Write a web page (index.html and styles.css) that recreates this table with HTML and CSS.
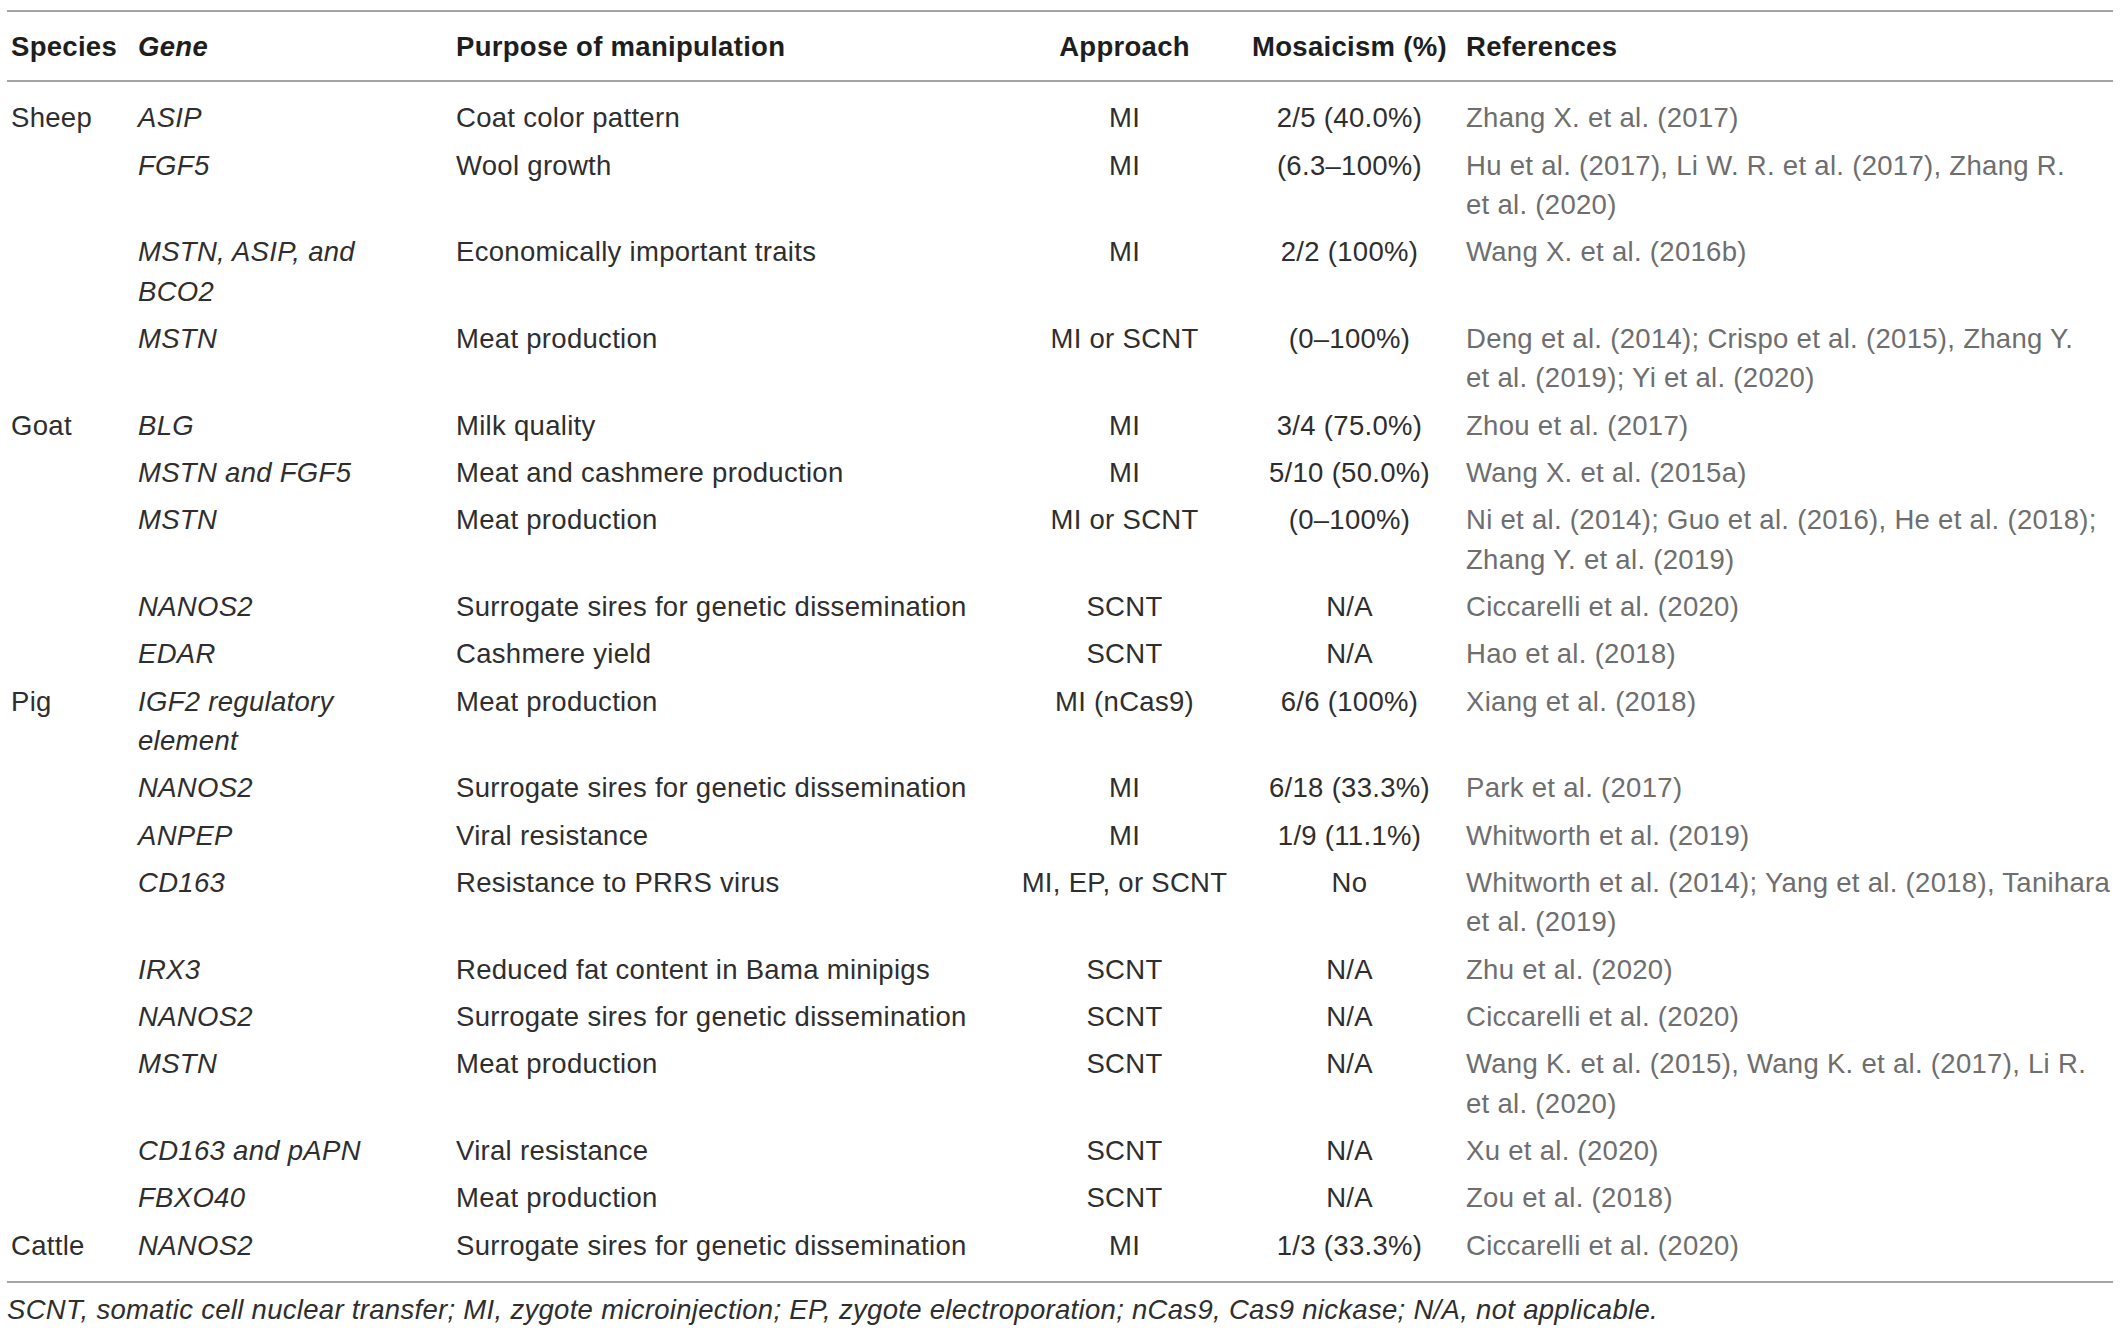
FILE: index.html
```html
<!DOCTYPE html>
<html lang="en">
<head>
<meta charset="utf-8">
<title>Table</title>
<link rel="stylesheet" href="styles.css">
</head>
<body>
<div class="page">
<table class="data">
<colgroup>
<col class="c-species"><col class="c-gene"><col class="c-purpose"><col class="c-approach"><col class="c-mosaic"><col class="c-refs">
</colgroup>
<thead>
<tr>
<th>Species</th>
<th><i>Gene</i></th>
<th>Purpose of manipulation</th>
<th class="ctr">Approach</th>
<th class="ctr">Mosaicism (%)</th>
<th>References</th>
</tr>
</thead>
<tbody>
<tr><td>Sheep</td><td class="gene">ASIP</td><td>Coat color pattern</td><td class="ctr">MI</td><td class="ctr">2/5 (40.0%)</td><td class="ref">Zhang X. et al. (2017)</td></tr>
<tr><td></td><td class="gene">FGF5</td><td>Wool growth</td><td class="ctr">MI</td><td class="ctr">(6.3–100%)</td><td class="ref">Hu et al. (2017), Li W. R. et al. (2017), Zhang R.<br>et al. (2020)</td></tr>
<tr><td></td><td class="gene">MSTN, ASIP, and<br>BCO2</td><td>Economically important traits</td><td class="ctr">MI</td><td class="ctr">2/2 (100%)</td><td class="ref">Wang X. et al. (2016b)</td></tr>
<tr><td></td><td class="gene">MSTN</td><td>Meat production</td><td class="ctr">MI or SCNT</td><td class="ctr">(0–100%)</td><td class="ref">Deng et al. (2014); Crispo et al. (2015), Zhang Y.<br>et al. (2019); Yi et al. (2020)</td></tr>
<tr><td>Goat</td><td class="gene">BLG</td><td>Milk quality</td><td class="ctr">MI</td><td class="ctr">3/4 (75.0%)</td><td class="ref">Zhou et al. (2017)</td></tr>
<tr><td></td><td class="gene">MSTN and FGF5</td><td>Meat and cashmere production</td><td class="ctr">MI</td><td class="ctr">5/10 (50.0%)</td><td class="ref">Wang X. et al. (2015a)</td></tr>
<tr><td></td><td class="gene">MSTN</td><td>Meat production</td><td class="ctr">MI or SCNT</td><td class="ctr">(0–100%)</td><td class="ref">Ni et al. (2014); Guo et al. (2016), He et al. (2018);<br>Zhang Y. et al. (2019)</td></tr>
<tr><td></td><td class="gene">NANOS2</td><td>Surrogate sires for genetic dissemination</td><td class="ctr">SCNT</td><td class="ctr">N/A</td><td class="ref">Ciccarelli et al. (2020)</td></tr>
<tr><td></td><td class="gene">EDAR</td><td>Cashmere yield</td><td class="ctr">SCNT</td><td class="ctr">N/A</td><td class="ref">Hao et al. (2018)</td></tr>
<tr><td>Pig</td><td class="gene">IGF2 regulatory<br>element</td><td>Meat production</td><td class="ctr">MI (nCas9)</td><td class="ctr">6/6 (100%)</td><td class="ref">Xiang et al. (2018)</td></tr>
<tr><td></td><td class="gene">NANOS2</td><td>Surrogate sires for genetic dissemination</td><td class="ctr">MI</td><td class="ctr">6/18 (33.3%)</td><td class="ref">Park et al. (2017)</td></tr>
<tr><td></td><td class="gene">ANPEP</td><td>Viral resistance</td><td class="ctr">MI</td><td class="ctr">1/9 (11.1%)</td><td class="ref">Whitworth et al. (2019)</td></tr>
<tr><td></td><td class="gene">CD163</td><td>Resistance to PRRS virus</td><td class="ctr">MI, EP, or SCNT</td><td class="ctr">No</td><td class="ref">Whitworth et al. (2014); Yang et al. (2018), Tanihara<br>et al. (2019)</td></tr>
<tr><td></td><td class="gene">IRX3</td><td>Reduced fat content in Bama minipigs</td><td class="ctr">SCNT</td><td class="ctr">N/A</td><td class="ref">Zhu et al. (2020)</td></tr>
<tr><td></td><td class="gene">NANOS2</td><td>Surrogate sires for genetic dissemination</td><td class="ctr">SCNT</td><td class="ctr">N/A</td><td class="ref">Ciccarelli et al. (2020)</td></tr>
<tr><td></td><td class="gene">MSTN</td><td>Meat production</td><td class="ctr">SCNT</td><td class="ctr">N/A</td><td class="ref">Wang K. et al. (2015), Wang K. et al. (2017), Li R.<br>et al. (2020)</td></tr>
<tr><td></td><td class="gene">CD163 and pAPN</td><td>Viral resistance</td><td class="ctr">SCNT</td><td class="ctr">N/A</td><td class="ref">Xu et al. (2020)</td></tr>
<tr><td></td><td class="gene">FBXO40</td><td>Meat production</td><td class="ctr">SCNT</td><td class="ctr">N/A</td><td class="ref">Zou et al. (2018)</td></tr>
<tr><td>Cattle</td><td class="gene">NANOS2</td><td>Surrogate sires for genetic dissemination</td><td class="ctr">MI</td><td class="ctr">1/3 (33.3%)</td><td class="ref">Ciccarelli et al. (2020)</td></tr>
</tbody>
</table>
<p class="note">SCNT, somatic cell nuclear transfer; MI, zygote microinjection; EP, zygote electroporation; nCas9, Cas9 nickase; N/A, not applicable.</p>
</div>
</body>
</html>
```
FILE: styles.css
```css
html, body {
  margin: 0;
  padding: 0;
  background: #ffffff;
}

.page {
  padding: 10px 0 0 7px;
  font-family: "Liberation Sans", Arial, sans-serif;
  font-size: 27.5px;
  letter-spacing: 0.3px;
  color: #2e2e2e;
}

.data {
  width: 2106px;
  table-layout: fixed;
  border-collapse: collapse;
  border-top: 2px solid #a4a4a4;
  border-bottom: 2px solid #a4a4a4;
}

.c-species { width: 127px; }
.c-gene { width: 318px; }
.c-purpose { width: 560px; }
.c-approach { width: 225px; }
.c-mosaic { width: 225px; }
.c-refs { width: 651px; }

.data th,
.data td {
  padding: 4px 4px;
  line-height: 39.33px;
  text-align: left;
  vertical-align: top;
  white-space: nowrap;
}

.data th {
  padding-top: 14.5px;
  padding-bottom: 14.5px;
  font-weight: bold;
  color: #1e1e1e;
  border-bottom: 2px solid #a4a4a4;
}

.data tbody tr:first-child td { padding-top: 16px; }
.data tbody tr:last-child td { padding-bottom: 16px; }

.data .ctr { text-align: center; }

.gene { font-style: italic; }

.ref { color: #6e6e6e; }

.note {
  margin: 0;
  padding-top: 7px;
  line-height: 39.33px;
  font-style: italic;
  color: #2e2e2e;
}
```
